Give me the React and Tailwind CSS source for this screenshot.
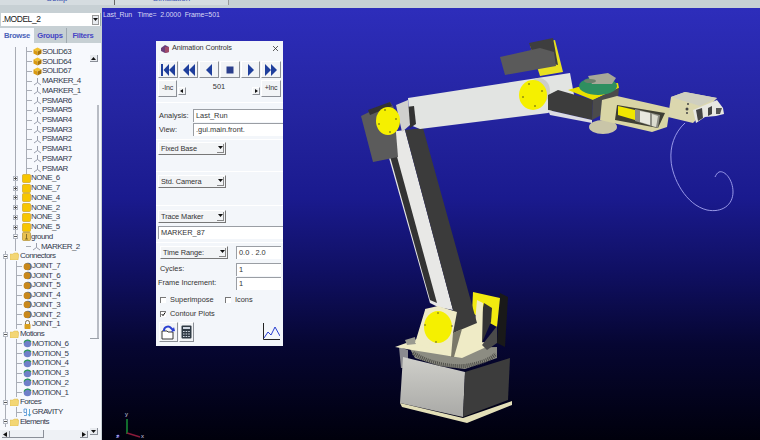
import React from "react";

const font = "font-['Liberation_Sans',Arial,sans-serif]";

const Cube = () => (
  <svg width="9" height="9" viewBox="0 0 9 9" className="shrink-0">
    <polygon points="4.5,0.5 8.5,2.5 4.5,4.5 0.5,2.5" fill="#f2c230" />
    <polygon points="0.5,2.5 4.5,4.5 4.5,8.5 0.5,6.5" fill="#d99a10" />
    <polygon points="8.5,2.5 4.5,4.5 4.5,8.5 8.5,6.5" fill="#a87408" />
  </svg>
);
const Marker = () => (
  <svg width="9" height="9" viewBox="0 0 9 9" className="shrink-0" fill="none" stroke="#8d93a3" strokeWidth="0.9">
    <path d="M4.5 1V5.5L1 8M4.5 5.5L8 8" />
  </svg>
);
const Box = () => (
  <svg width="9" height="9" viewBox="0 0 9 9" className="shrink-0">
    <rect x="0.5" y="0.5" width="8" height="8" rx="1" fill="#f7c600" stroke="#c89b10" strokeWidth="0.6" />
  </svg>
);
const Ground = () => (
  <svg width="9" height="9" viewBox="0 0 9 9" className="shrink-0">
    <rect x="0.5" y="0.5" width="8" height="8" rx="1" fill="#e8c050" stroke="#a88420" strokeWidth="0.6" />
    <path d="M4.5 2V7M3 7H6" stroke="#6a5a20" strokeWidth="0.8" />
  </svg>
);
const Folder = () => (
  <svg width="9" height="8" viewBox="0 0 9 8" className="shrink-0 ml-[2px] mr-[1px]">
    <path d="M0 2H3L4 1H8V2.5H9L8 8H0Z" fill="#f3d675" stroke="#d6b040" strokeWidth="0.4" />
  </svg>
);
const Joint = () => (
  <svg width="9" height="9" viewBox="0 0 9 9" className="shrink-0">
    <circle cx="5" cy="4.5" r="3.8" fill="#4c6d9c" />
    <circle cx="4" cy="4.7" r="3.4" fill="#c8881c" />
  </svg>
);
const Lock = () => (
  <svg width="9" height="9" viewBox="0 0 9 9" className="shrink-0">
    <path d="M2.5 4V2.5a2 2 0 0 1 4 0V4" fill="none" stroke="#706040" strokeWidth="0.9" />
    <rect x="1.5" y="4" width="6" height="5" rx="0.8" fill="#d9a020" />
  </svg>
);
const Motion = () => (
  <svg width="9" height="9" viewBox="0 0 9 9" className="shrink-0">
    <circle cx="4.5" cy="4.5" r="3.8" fill="#6f7fc8" />
    <path d="M1 3.5A4 4 0 0 1 8 3" fill="none" stroke="#2f9a5a" strokeWidth="1.2" />
  </svg>
);
const Gravity = () => (
  <svg width="9" height="9" viewBox="0 0 9 9" className="shrink-0" fill="none">
    <path d="M1 1H3.5V4.5H1V1M3.5 4.5V7.5H1" stroke="#4a8ed0" strokeWidth="0.8" />
    <path d="M6.5 1V8M5 6L6.5 8.2L8 6" stroke="#3a9ad0" strokeWidth="0.8" />
  </svg>
);

const Plus = ({ minus }) => (
  <span className="w-[5px] h-[5px] shrink-0 border border-[#b5bac4] bg-white flex items-center justify-center relative">
    <span className="w-[3px] h-px bg-[#555]" />
    {!minus && <span className="absolute w-px h-[3px] bg-[#555]" />}
  </span>
);

const Row = ({ icon, label, lead }) => (
  <div className="flex items-center h-[9.74px] whitespace-nowrap">
    {lead}
    {icon}
    <span className="text-[8px] leading-none tracking-[-0.55px] text-[#333a4d]">{label}</span>
  </div>
);

const Tick = () => <span className="w-[5px] h-px bg-[#a9adb6] shrink-0 mr-[1px]" />;

const Items = ({ icon, labels }) =>
  labels.map((l) => <Row key={l} icon={icon} label={l} lead={<Tick />} />);

const Tree = () => (
  <div className="flex-1 min-h-0 overflow-hidden pt-[4px] pl-[3px]">
    <div className="ml-[2px]">
      <div className="ml-[10px] border-l border-[#a9adb6]">
        <div className="ml-[10px] border-l border-[#a9adb6] w-[70px]">
          <Items icon={<Cube />} labels={["SOLID63", "SOLID64", "SOLID67"]} />
          <Items icon={<Marker />} labels={["MARKER_4", "MARKER_1", "PSMAR6", "PSMAR5", "PSMAR4", "PSMAR3", "PSMAR2", "PSMAR1", "PSMAR7", "PSMAR"]} />
        </div>
        {["NONE_6", "NONE_7", "NONE_4", "NONE_2", "NONE_3", "NONE_5"].map((l) => (
          <Row key={l} icon={<Box />} label={l} lead={<span className="-ml-[3px] mr-[4px] flex"><Plus /></span>} />
        ))}
        <Row icon={<Ground />} label="ground" lead={<span className="-ml-[3px] mr-[4px] flex"><Plus minus /></span>} />
        <div className="ml-[10px]">
          <Row icon={<Marker />} label="MARKER_2" lead={<Tick />} />
        </div>
      </div>
    </div>
    <Group label="Connectors">
      <Items icon={<Joint />} labels={["JOINT_7", "JOINT_6", "JOINT_5", "JOINT_4", "JOINT_3", "JOINT_2"]} />
      <Row icon={<Lock />} label="JOINT_1" lead={<Tick />} />
    </Group>
    <Group label="Motions">
      <Items icon={<Motion />} labels={["MOTION_6", "MOTION_5", "MOTION_4", "MOTION_3", "MOTION_2", "MOTION_1"]} />
    </Group>
    <Group label="Forces">
      <Row icon={<Gravity />} label="GRAVITY" lead={<Tick />} />
    </Group>
    <Group label="Elements" />
  </div>
);

const Group = ({ label, children }) => (
  <div className="ml-[2px] border-l border-[#a9adb6]">
    <Row icon={<Folder />} label={label} lead={<span className="-ml-[3px] flex"><Plus minus /></span>} />
    {children && <div className="ml-[10px] border-l border-[#a9adb6] w-fit">{children}</div>}
  </div>
);

const Arrow = ({ d }) => (
  <span className="w-[8px] h-[7px] bg-[#e8ebef] border-r border-b border-[#8a8f98] flex items-center justify-center">
    <svg width="5" height="5" viewBox="0 0 5 5"><polygon points={d} fill="#111" /></svg>
  </span>
);

const Sidebar = () => (
  <div className="w-[102px] shrink-0 h-full bg-[#c7d0d4] flex flex-col relative">
    <div className="h-[5px]" />
    <div className="h-[13px] mx-[1px] bg-white flex items-center justify-between pr-[1px] border-r border-[#9aa]">
      <span className="text-[8.5px] tracking-[-0.45px] text-[#222] pl-[1px]">.MODEL_2</span>
      <span className="w-[7px] h-[10px] bg-[#e8ebef] border border-[#999] flex items-center justify-center">
        <svg width="5" height="4" viewBox="0 0 5 4"><polygon points="0,0 5,0 2.5,3" fill="#111" /></svg>
      </span>
    </div>
    <div className="h-[2px]" />
    <div className="h-[15px] flex text-[7.6px] font-bold tracking-[-0.25px] text-[#4646c4] pr-[3px]">
      <div className="w-[34px] bg-[#f7f9fd] flex items-center justify-center text-[#4a62b8]">Browse</div>
      <div className="w-[33px] flex items-center justify-center border-r border-[#9fa9b0]">Groups</div>
      <div className="flex-1 flex items-center justify-center">Filters</div>
    </div>
    <div className="flex-1 min-h-0 bg-[#f7f9fd] mr-[1px] flex flex-col">
      <Tree />
      <div className="h-[10px] shrink-0 bg-[#eef1f5] flex items-center relative">
        <span className="absolute left-[2px] top-[1px]"><Arrow d="4,0 4,5 0,2.5" /></span>
        <span className="absolute left-[80px] top-[1px]"><Arrow d="1,0 1,5 5,2.5" /></span>
        <span className="absolute left-[8px] top-0 w-[36px] h-[8px] border-b border-r border-[#8a8f98]" />
      </div>
    </div>
    <span className="absolute left-[90px] top-[47px]"><Arrow d="0,4 5,4 2.5,1" /></span>
    <span className="absolute left-[90px] top-[420px]"><Arrow d="0,1 5,1 2.5,4" /></span>
    <span className="absolute left-[90px] top-[326px] w-[9px] h-[5px] border-b border-r border-[#9aa0a8]" />
    <span className="absolute left-[97px] top-[97px] w-[2px] h-[233px] bg-[#b8bcc4]" />
  </div>
);

const Sep = () => <div className="h-px bg-[#c4c9cf] border-b border-white" />;

const Select = ({ label, w = "w-[68px]" }) => (
  <div className={`${w} h-[13px] bg-[#f2f4f6] border-t border-l border-white border-r border-b border-r-[#777] border-b-[#777] flex items-center justify-between pl-[2px] pr-[1px]`}>
    <span className="text-[7.4px] tracking-[-0.1px] text-[#333]">{label}</span>
    <span className="w-[7px] h-[9px] flex items-center justify-center border-r border-b border-[#888]">
      <svg width="5" height="4" viewBox="0 0 5 4"><polygon points="0,0 5,0 2.5,3" fill="#111" /></svg>
    </span>
  </div>
);

const Input = ({ value, className }) => (
  <div className={`h-[13px] bg-white border-t border-l border-[#9a9ea4] flex items-center pl-[2px] text-[7.4px] text-[#333] ${className}`}>{value}</div>
);

const TransportIcon = ({ kind }) => {
  const c = "#1f3f9c";
  const shapes = {
    first: <><rect x="0" y="0" width="2" height="12" fill={c} /><polygon points="8,0 2.5,6 8,12" fill={c} /><polygon points="14,0 8,6 14,12" fill={c} /></>,
    back2: <><polygon points="7,0 1,6 7,12" fill={c} /><polygon points="13,0 7,6 13,12" fill={c} /></>,
    back: <polygon points="10,0 4,6 10,12" fill={c} />,
    stop: <rect x="3.5" y="2.5" width="7" height="7" fill="#2b3f8c" />,
    play: <polygon points="4,0 10,6 4,12" fill={c} />,
    fwd2: <><polygon points="1,0 7,6 1,12" fill={c} /><polygon points="7,0 13,6 7,12" fill={c} /></>,
  };
  return <svg width="14" height="12" viewBox="0 0 14 12">{shapes[kind]}</svg>;
};

const raised = "bg-[#f2f4f6] border-t border-l border-white border-r border-b border-r-[#8b8f96] border-b-[#8b8f96] flex items-center justify-center";

const Check = ({ checked }) => (
  <span className="w-[6px] h-[6px] bg-white border-t border-l border-[#777] flex items-center justify-center shrink-0">
    {checked && <svg width="6" height="6" viewBox="0 0 6 6"><path d="M0.8 3L2.4 5L5.2 1" fill="none" stroke="#111" strokeWidth="1.2" /></svg>}
  </span>
);

const AnimationControls = () => (
  <div className={`absolute left-[156px] top-[41px] w-[127px] h-[305px] bg-[#f3f6fa] flex flex-col ${font}`}>
    <div className="h-[15px] flex items-center pl-[5px] pr-[4px]">
      <svg width="8" height="8" viewBox="0 0 8 8" className="shrink-0">
        <polygon points="0,3 4,0 8,2 8,7 4,8 0,6" fill="#6b3f7a" />
        <polygon points="4,2 8,2 8,7 4,8" fill="#a04a6a" />
      </svg>
      <span className="ml-[3px] text-[7.3px] tracking-[-0.1px] text-[#333]">Animation Controls</span>
      <span className="ml-auto text-[#333]">
        <svg width="7" height="7" viewBox="0 0 7 7"><path d="M1 1L6 6M6 1L1 6" stroke="#333" strokeWidth="0.8" /></svg>
      </span>
    </div>
    <div className="px-[2px] pt-[5px] flex gap-[1px]">
      {["first", "back2", "back", "stop", "play", "fwd2"].map((k) => (
        <div key={k} className={`w-[20px] h-[17px] ${raised}`}><TransportIcon kind={k} /></div>
      ))}
    </div>
    <div className="px-[2px] pt-[2px] flex h-[19px]">
      <div className={`w-[19px] h-[17px] text-[7px] tracking-[-0.2px] text-[#333] ${raised}`}>-Inc</div>
      <div className="flex-1 relative flex justify-center">
        <span className="text-[7.4px] leading-none mt-[3px] text-[#333]">501</span>
        <span className={`absolute left-[1px] bottom-[2px] w-[8px] h-[8px] ${raised}`}>
          <svg width="4" height="4" viewBox="0 0 4 4"><polygon points="3,0 3,4 0,2" fill="#111" /></svg>
        </span>
        <span className={`absolute right-[1px] bottom-[2px] w-[8px] h-[8px] ${raised}`}>
          <svg width="4" height="4" viewBox="0 0 4 4"><polygon points="1,0 1,4 4,2" fill="#111" /></svg>
        </span>
      </div>
      <div className={`w-[20px] h-[17px] text-[7px] tracking-[-0.2px] text-[#333] ${raised}`}>+Inc</div>
    </div>
    <div className="h-[5px]" />
    <Sep />
    <div className="pl-[3px] pt-[6px] flex items-center h-[19px] text-[7.4px] text-[#333]">
      <span className="w-[34px]">Analysis:</span>
      <Input value="Last_Run" className="flex-1" />
    </div>
    <div className="pl-[3px] flex items-center h-[15px] text-[7.4px] text-[#333]">
      <span className="w-[34px]">View:</span>
      <Input value=".gui.main.front." className="flex-1" />
    </div>
    <div className="h-[2px]" />
    <Sep />
    <div className="pl-[2px] pt-[2px] h-[31px]"><Select label="Fixed Base" /></div>
    <Sep />
    <div className="pl-[2px] pt-[3px] h-[33px]"><Select label="Std. Camera" /></div>
    <Sep />
    <div className="pl-[2px] pt-[4px] h-[20px]"><Select label="Trace Marker" /></div>
    <div className="pl-[2px] h-[16px]"><Input value="MARKER_87" className="w-full" /></div>
    <Sep />
    <div className="pl-[4px] pr-[2px] pt-[3px] h-[19px] flex justify-between items-start">
      <Select label="Time Range:" />
      <Input value="0.0 . 2.0" className="w-[45px]" />
    </div>
    <div className="pl-[4px] pr-[2px] h-[14px] flex justify-between items-center text-[7.4px] text-[#333]">
      <span>Cycles:</span>
      <Input value="1" className="w-[45px]" />
    </div>
    <div className="pl-[2px] pr-[2px] h-[14px] flex justify-between items-center text-[7.4px] text-[#333]">
      <span>Frame Increment:</span>
      <Input value="1" className="w-[45px]" />
    </div>
    <div className="pl-[4px] pt-[3px] flex items-center text-[7.4px] text-[#333] h-[17px]">
      <Check />
      <span className="ml-[4px] w-[55px]">Superimpose</span>
      <Check />
      <span className="ml-[4px]">Icons</span>
    </div>
    <div className="pl-[4px] flex items-center text-[7.4px] text-[#333] h-[13px]">
      <Check checked />
      <span className="ml-[4px]">Contour Plots</span>
    </div>
    <div className="mt-[2px] pl-[3px] pr-[3px] flex items-center gap-[1px]">
      <div className={`w-[19px] h-[20px] ${raised}`}>
        <svg width="15" height="15" viewBox="0 0 15 15">
          <path d="M1 6H6L7 7H12V14H1Z" fill="#fff" stroke="#222" strokeWidth="0.9" />
          <path d="M3 6A4 4 0 0 1 10 3L12 5" fill="none" stroke="#2a3fd0" strokeWidth="2" />
          <polygon points="10,7 14,6 13,2" fill="#2a3fd0" />
        </svg>
      </div>
      <div className={`w-[15px] h-[20px] ${raised}`}>
        <svg width="11" height="14" viewBox="0 0 11 14">
          <rect x="0.5" y="0.5" width="10" height="13" rx="1" fill="#2f3a44" />
          <rect x="2" y="2" width="7" height="2" fill="#cfd6e0" />
          <path d="M2 6.5H9M2 9H9M2 11.5H9" stroke="#cfd6e0" strokeWidth="1.2" strokeDasharray="1.6 1" />
        </svg>
      </div>
      <svg width="18" height="18" viewBox="0 0 18 18" className="ml-auto">
        <path d="M1.5 0V16.5H18" fill="none" stroke="#222" strokeWidth="1" />
        <path d="M2 15L6 9L9 12L13 4L18 13" fill="none" stroke="#2a3fd0" strokeWidth="1" />
      </svg>
    </div>
  </div>
);

// robot drawing, coordinates are page pixels
const Robot = () => (
  <svg width="760" height="440" viewBox="0 0 760 440" className="absolute left-0 top-0">
    <defs>
      <linearGradient id="front" x1="0" y1="0" x2="0" y2="1">
        <stop offset="0" stopColor="#cfcfca" />
        <stop offset="1" stopColor="#a9a9a6" />
      </linearGradient>
    </defs>

    {/* trace line */}
    <path d="M685 123C674 133 670 147 671 160C672 178 686 205 707 210C722 213 733 205 733 192C733 180 725 170 719 172C717 173 716 175 715 177" fill="none" stroke="#a5a5f0" strokeWidth="0.9" />

    {/* base */}
    <polygon points="399,347 401,368 408,368 408,350" fill="#8b8b90" />
    <polygon points="403,357 465,372 463,417 400,403" fill="url(#front)" />
    <polygon points="465,372 510,358 508,400 463,417" fill="#3c3c3c" />
    <polygon points="400,403 463,418 512,401 512,405 467,423 402,407" fill="#e3dfb8" />
    <polygon points="410,349 497,347 497,358 465,369 440,366 415,358" fill="#8c8c82" />
    <path d="M413 353C430 364 450 367 465 366C478 364 490 360 496 354" fill="none" stroke="#4f4f4a" strokeWidth="4" strokeDasharray="1 1" />
    <polygon points="395,347 420,338 495,343 462,358 412,350" fill="#efebc6" />
    <polygon points="405,340 415,337 416,344 407,345" fill="#9a9a90" />

    {/* shoulder plate */}
    <polygon points="500,293 508,297 505,347 497,343" fill="#191919" />
    <polygon points="473,292 500,298 497,327 472,313" fill="#f2ea10" />
    <polygon points="484,303 492,308 491,322 481,345 482,312" fill="#333" />
    <polygon points="482,345 497,326 497,343 487,350" fill="#4a4a4a" />
    <polygon points="477,300 483,303 482,345 453,357 415,343 425,310 455,313 453,333 475,322" fill="#efebc6" />

    {/* lower arm */}
    <polygon points="382,133 405,130 453,310 438,307 430,303" fill="#e8e8e6" />
    <polygon points="386,142 393,142 437,303 430,300" fill="#333" />
    <polygon points="405,130 423,128 477,323 453,333 453,310" fill="#3b3b3b" />
    <polygon points="425,309 438,306 457,312 453,333 430,345" fill="#efebc6" />
    <polygon points="453,333 462,329 454,357 451,357" fill="#7a7868" />
    <ellipse cx="438" cy="327" rx="14" ry="16" fill="#f5f000" />
    <g fill="#333">
      <circle cx="438" cy="313" r="0.7" /><circle cx="452" cy="326" r="0.7" /><circle cx="436" cy="342" r="0.7" /><circle cx="425" cy="325" r="0.7" />
    </g>

    {/* elbow motor */}
    <polygon points="361,116 390,102 394,108 398,157 373,162" fill="#5b5b5b" />
    <polygon points="368,110 390,102 392,106 370,115" fill="#333" />

    {/* upper arm */}
    <polygon points="408,98 570,73 575,100 548,113 420,129 410,125" fill="#e2e4e2" />
    <polygon points="406,107 414,106 416,124 410,128" fill="#333" />
    <polygon points="396,105 408,100 410,125 402,132" fill="#d0d0ce" />
    <ellipse cx="388" cy="121" rx="12" ry="14" fill="#f5f000" />
    <g fill="#222">
      <circle cx="385" cy="110" r="0.7" /><circle cx="396" cy="119" r="0.7" /><circle cx="390" cy="132" r="0.7" /><circle cx="379" cy="124" r="0.7" />
    </g>

    {/* top motor */}
    <polygon points="530,45 555,40 563,72 540,76" fill="#e8e020" />
    <polygon points="529,43 553,38 558,65 535,60" fill="#3e3e3e" />
    <polygon points="500,57 540,48 554,52 556,66 505,75" fill="#5a5a5a" />
    <ellipse cx="539" cy="91" rx="11" ry="13" fill="#cdcdc8" />
    <ellipse cx="533" cy="95" rx="14" ry="15" fill="#f5f000" />
    <g fill="#222">
      <circle cx="529" cy="84" r="0.7" /><circle cx="542" cy="91" r="0.7" /><circle cx="535" cy="106" r="0.7" /><circle cx="523" cy="97" r="0.7" />
    </g>

    {/* wrist */}
    <ellipse cx="603" cy="127" rx="14" ry="7" fill="#c9c5a8" />
    <polygon points="548,95 558,90 593,100 592,120 548,110" fill="#3c3c3c" />
    <polygon points="548,110 592,120 592,123 550,115" fill="#dcdce2" />
    <polygon points="568,90 578,87 618,83 619,88 593,100" fill="#e8e000" />
    <polygon points="593,100 619,88 617,107 592,120" fill="#4b4b4b" />
    <ellipse cx="598" cy="86" rx="19" ry="9" fill="#2f8f60" />
    <polygon points="588,76 608,73 616,78 612,84 592,84" fill="#a8a898" />
    <ellipse cx="590" cy="81" rx="6" ry="2" fill="#6d7f6d" />

    {/* tool bracket */}
    <polygon points="602,100 617,96 670,108 667,127 652,132 600,120" fill="#d9d5a5" />
    <polygon points="617,105 665,113 658,128 615,120" fill="#3f3f34" />
    <polygon points="618,106 635,110 635,120 618,115" fill="#f0e800" />
    <polygon points="635,109 660,115 658,128 635,121" fill="#8e8e86" />
    <polygon points="640,111 650,113 650,125 640,122" fill="#e8e8e0" />
    <polygon points="652,114 658,116 656,127 652,126" fill="#dcdcd0" />

    {/* gripper */}
    <polygon points="671,97 685,92 717,98 693,123 668,117" fill="#dbd7ae" />
    <polygon points="671,97 685,92 717,98 700,106" fill="#cfcfc0" />
    <polygon points="693,110 717,100 723,108 724,114 716,116 705,117 696,123" fill="#e8e8e2" />
    <polygon points="696,110 702,108 703,118 698,121" fill="#444" />
    <polygon points="708,108 712,106 712,114 708,116" fill="#444" />
    <polygon points="716,108 722,108 720,114 716,114" fill="#555" />
    <circle cx="687" cy="109" r="1.5" fill="#444" />
    <circle cx="688" cy="104" r="1" fill="#444" />
    <circle cx="687" cy="113" r="1" fill="#444" />

    {/* axes triad */}
    <path d="M127 434V419" stroke="#1a9a3a" strokeWidth="1.4" />
    <path d="M127 433L140 437" stroke="#8a1a3a" strokeWidth="1.4" />
    <circle cx="118" cy="436" r="1.5" fill="#3a3ac8" />
  </svg>
);

export default function App() {
  return (
    <div className={`relative w-[760px] h-[440px] overflow-hidden flex flex-col bg-[#c7d0d4] ${font}`}>
      <div className="h-[8px] shrink-0 flex">
        <div className="w-[115px] h-[5px] bg-[#d5dce0] border-r border-[#666] overflow-hidden flex justify-center">
          <span className="text-[8px] leading-none -mt-[5px] text-[#3a50b0]">Setup</span>
        </div>
        <div className="w-[114px] h-[5px] bg-[#d5dce0] border-r border-[#999] overflow-hidden flex justify-center">
          <span className="text-[8px] leading-none -mt-[5px] text-[#3a50b0]">Simulation</span>
        </div>
      </div>
      <div className="flex-1 min-h-0 flex">
        <Sidebar />
        <div className="flex-1 bg-[linear-gradient(180deg,#2d2dbb_0%,#24249f_25%,#1a1a8e_44%,#0f0f60_62%,#060632_78%,#00000c_100%)] pl-[1px] pt-[2px]">
          <span className="block text-[7px] leading-[10px] tracking-[-0.1px] text-[#d8d8f4] whitespace-pre">Last_Run   Time=  2.0000  Frame=501</span>
        </div>
      </div>
      <Robot />
      <AnimationControls />
      <span className="absolute left-[125px] top-[411px] text-[6px] leading-none text-[#d0d0e0]">y</span>
      <span className="absolute left-[141px] top-[433px] text-[6px] leading-none text-[#d0d0e0]">x</span>
      <span className="absolute left-[116px] top-[433px] text-[6px] leading-none text-[#d0d0e0]">z</span>
    </div>
  );
}
